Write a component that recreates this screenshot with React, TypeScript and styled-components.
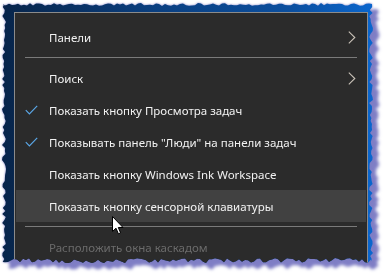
import React from 'react';
import styled, { createGlobalStyle } from 'styled-components';

const GlobalStyle = createGlobalStyle`
    html, body {
        margin: 0;
        padding: 0;
        background: #ffffff;
    }
    body {
        font-family: "Noto Sans", "Liberation Sans", sans-serif;
    }
`

// torn paper edge, deterministic so every render looks the same
function tornEdge(): string {
    let seed = 7;
    const rnd = () => {
        seed = (seed * 16807) % 2147483647;
        return (seed % 1000) / 1000;
    };
    const pts: string[] = [];
    for (let x = 3; x <= 371; x += 3) pts.push(`${x}px ${(3 + rnd() * 3).toFixed(1)}px`);
    for (let y = 4; y <= 262; y += 3) pts.push(`${(369 + rnd() * 4).toFixed(1)}px ${y}px`);
    for (let x = 371; x >= 3; x -= 3) pts.push(`${x}px ${(258 + rnd() * 5).toFixed(1)}px`);
    for (let y = 262; y >= 4; y -= 3) pts.push(`${(2 + rnd() * 4).toFixed(1)}px ${y}px`);
    return `polygon(${pts.join(', ')})`;
}

const EDGE = tornEdge();

type Item =
    | { kind: 'item'; label: string; checked?: boolean; sub?: boolean; hover?: boolean; disabled?: boolean }
    | { kind: 'sep' };

const items: Item[] = [
    { kind: 'item', label: 'Панели', sub: true },
    { kind: 'sep' },
    { kind: 'item', label: 'Поиск', sub: true },
    { kind: 'item', label: 'Показать кнопку Просмотра задач', checked: true },
    { kind: 'item', label: 'Показывать панель "Люди" на панели задач', checked: true },
    { kind: 'item', label: 'Показать кнопку Windows Ink Workspace' },
    { kind: 'item', label: 'Показать кнопку сенсорной клавиатуры', hover: true },
    { kind: 'sep' },
    { kind: 'item', label: 'Расположить окна каскадом', disabled: true },
];

const Check = () => (
    <svg width="13" height="10" viewBox="0 0 13 10">
        <path d="M0.8 5.2 L4.4 8.8 L12.2 0.8" fill="none" stroke="#5aa6e6" strokeWidth="1.2" />
    </svg>
);

const Chevron = () => (
    <svg width="8" height="13" viewBox="0 0 8 13">
        <path d="M0.8 0.6 L6.8 6.5 L0.8 12.4" fill="none" stroke="#c9c2b8" strokeWidth="1.1" />
    </svg>
);

const Cursor = () => (
    <svg width="12" height="19" viewBox="0 0 12 19">
        <path
            d="M0.5 0.5 L0.5 15.5 L4 12.2 L6.4 17.8 L8.6 16.9 L6.3 11.5 L11 11.5 Z"
            fill="#ffffff"
            stroke="#000000"
            strokeWidth="1"
            strokeLinejoin="round"
        />
    </svg>
);

export default function App() {
    return (
        <>
            <GlobalStyle />
            <Page>
                <Desktop>
                    <Menu>
                        {items.map((it, i) => {
                            if (it.kind === 'sep') return <Separator key={i} />;
                            return (
                                <Row key={i} $hover={it.hover}>
                                    <Mark>{it.checked && <Check />}</Mark>
                                    <Label $disabled={it.disabled}>{it.label}</Label>
                                    <Arrow>{it.sub && <Chevron />}</Arrow>
                                    {it.hover && (
                                        <Pointer>
                                            <Cursor />
                                        </Pointer>
                                    )}
                                </Row>
                            );
                        })}
                    </Menu>
                </Desktop>
            </Page>
        </>
    );
}

const Page = styled.div`
    width: 387px;
    height: 275px;
    overflow: hidden;
    filter: drop-shadow(0 0 1px #7d7cc3) drop-shadow(6px 6px 1.5px #7f7ec5);
`

const Desktop = styled.div`
    width: 387px;
    height: 275px;
    box-sizing: border-box;
    padding: 12px 19px 0 14px;
    display: flex;
    flex-direction: column;
    background: linear-gradient(90deg, #072449 0%, #0a3f80 40%, #0b4f9f 75%, #0a6ad6 100%);
    clip-path: ${EDGE};
`

const Menu = styled.div`
    flex: 1;
    display: flex;
    flex-direction: column;
    padding: 8px 0;
    background: #2b2b2b;
    border: 1px solid #8b8b8b;
    border-bottom: none;
`

const Row = styled.div<{ $hover?: boolean }>`
    position: relative;
    height: 32px;
    margin: 0 1px;
    display: flex;
    align-items: center;
    background: ${({ $hover }) => ($hover ? '#414141' : 'transparent')};
`

const Mark = styled.div`
    width: 33px;
    padding-left: 9px;
    box-sizing: border-box;
    display: flex;
    align-items: center;
`

const Label = styled.span<{ $disabled?: boolean }>`
    flex: 1;
    font-size: 11.5px;
    color: ${({ $disabled }) => ($disabled ? '#6b6b6b' : '#f2f2f2')};
    white-space: nowrap;
`

const Arrow = styled.div`
    width: 18px;
    display: flex;
    align-items: center;
`

const Pointer = styled.div`
    position: absolute;
    left: 96px;
    top: 26px;
    line-height: 0;
`

const Separator = styled.div`
    height: 1px;
    margin: 4px 10px;
    background: #7a7a7a;
`
